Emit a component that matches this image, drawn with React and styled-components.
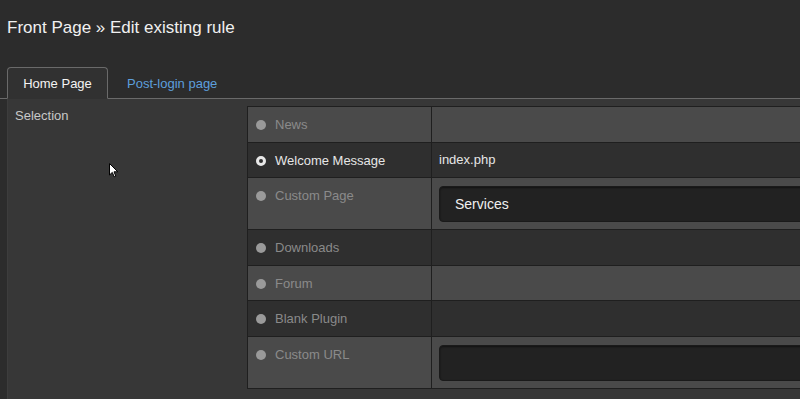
import styled, { createGlobalStyle } from "styled-components";

const Global = createGlobalStyle`
  html, body {
    margin: 0;
    padding: 0;
    background: #2c2c2c;
    overflow: hidden;
  }
  body {
    font-family: "Liberation Sans", Arial, sans-serif;
  }
`;

const Page = styled.div`
  width: 860px;
  height: 399px;
  background: #2c2c2c;
  position: relative;
`;

const Title = styled.h1`
  margin: 0;
  padding: 18px 0 0 7px;
  height: 51px;
  box-sizing: border-box;
  font-size: 17px;
  font-weight: normal;
  color: #f0f0f0;
`;

const TabBar = styled.div`
  display: flex;
  align-items: flex-end;
  padding-left: 7px;
  border-bottom: 1px solid #6a6a6a;
  height: 32px;
  margin-top: 15px;
`;

const Tab = styled.div`
  height: 32px;
  box-sizing: border-box;
  display: flex;
  align-items: center;
  justify-content: center;
  font-size: 13px;
  margin-bottom: -1px;
  color: ${(p) => (p.$active ? "#f4f4f4" : "#5d9fdc")};
  background: ${(p) => (p.$active ? "#313131" : "transparent")};
  border: 1px solid ${(p) => (p.$active ? "#6a6a6a" : "transparent")};
  border-bottom-color: ${(p) => (p.$active ? "#313131" : "transparent")};
  border-radius: 4px 4px 0 0;
  width: ${(p) => (p.$active ? "101px" : "auto")};
  padding: ${(p) => (p.$active ? "0" : "0 18px")};
`;

const Body = styled.div`
  display: flex;
  margin-left: 7px;
  background: #373737;
  border-left: 1px solid #3d3d3d;
  height: 300px;
  padding-top: 7px;
`;

const Label = styled.div`
  width: 239px;
  padding: 2px 0 0 7px;
  box-sizing: border-box;
  font-size: 13px;
  color: #c8c8c8;
`;

const Table = styled.div`
  display: grid;
  grid-template-columns: 183px 420px;
  align-self: flex-start;
  border: 1px solid #1f1f1f;
  border-right: none;
`;

const Cell = styled.div`
  background: ${(p) => (p.$odd ? "#4a4a4a" : "#2f2f2f")};
  border-bottom: ${(p) => (p.$last ? "none" : "1px solid #1f1f1f")};
  border-left: ${(p) => (p.$second ? "1px solid #1f1f1f" : "none")};
  height: ${(p) => p.$h}px;
  box-sizing: border-box;
  font-size: 13px;
`;

const Choice = styled.div`
  display: flex;
  align-items: center;
  gap: 9px;
  padding: 10px 0 0 8px;
  color: ${(p) => (p.$on ? "#e6e6e6" : "#8a8a8a")};
`;

const Radio = styled.span`
  width: 10px;
  height: 10px;
  border-radius: 50%;
  box-sizing: border-box;
  background: ${(p) => (p.$on ? "#2f2f2f" : "#9a9a9a")};
  border: ${(p) => (p.$on ? "3px solid #e8e8e8" : "none")};
`;

const Value = styled.div`
  padding: 9px 0 0 7px;
  color: #e6e6e6;
`;

const Field = styled.div`
  margin: 8px 0 0 7px;
  height: 36px;
  box-sizing: border-box;
  background: #222222;
  border: 1px solid #1a1a1a;
  border-radius: 4px;
  box-shadow: inset 0 1px 2px rgba(0, 0, 0, 0.5);
  display: flex;
  align-items: center;
  padding-left: 15px;
  color: #f0f0f0;
  font-size: 14px;
`;

const Cursor = styled.svg`
  position: absolute;
  left: 109px;
  top: 163px;
`;

const rows = [
  { name: "News", h: 36 },
  { name: "Welcome Message", on: true, value: "index.php", h: 35 },
  { name: "Custom Page", field: "Services", h: 52 },
  { name: "Downloads", h: 36 },
  { name: "Forum", h: 35 },
  { name: "Blank Plugin", h: 36 },
  { name: "Custom URL", field: "", h: 52 },
];

export default function App() {
  return (
    <Page>
      <Global />
      <Title>Front Page » Edit existing rule</Title>
      <TabBar>
        <Tab $active>Home Page</Tab>
        <Tab>Post-login page</Tab>
      </TabBar>
      <Body>
        <Label>Selection</Label>
        <Table>
          {rows.map((r, i) => {
            const odd = i % 2 === 0;
            const last = i === rows.length - 1;
            const h = last ? r.h - 1 : r.h;
            return [
              <Cell key={r.name + "a"} $odd={odd} $h={h} $last={last}>
                <Choice $on={r.on}>
                  <Radio $on={r.on} />
                  {r.name}
                </Choice>
              </Cell>,
              <Cell key={r.name + "b"} $odd={odd} $h={h} $last={last} $second>
                {r.value && <Value>{r.value}</Value>}
                {r.field !== undefined && <Field>{r.field}</Field>}
              </Cell>,
            ];
          })}
        </Table>
      </Body>
      <Cursor width="10" height="16" viewBox="0 0 10 16">
        <path d="M0.5 0.5 L0.5 12 L3.3 9.4 L5.2 13.8 L6.8 13.1 L5 8.8 L8.8 8.8 Z" fill="#fff" stroke="#000" strokeWidth="1" />
      </Cursor>
    </Page>
  );
}
